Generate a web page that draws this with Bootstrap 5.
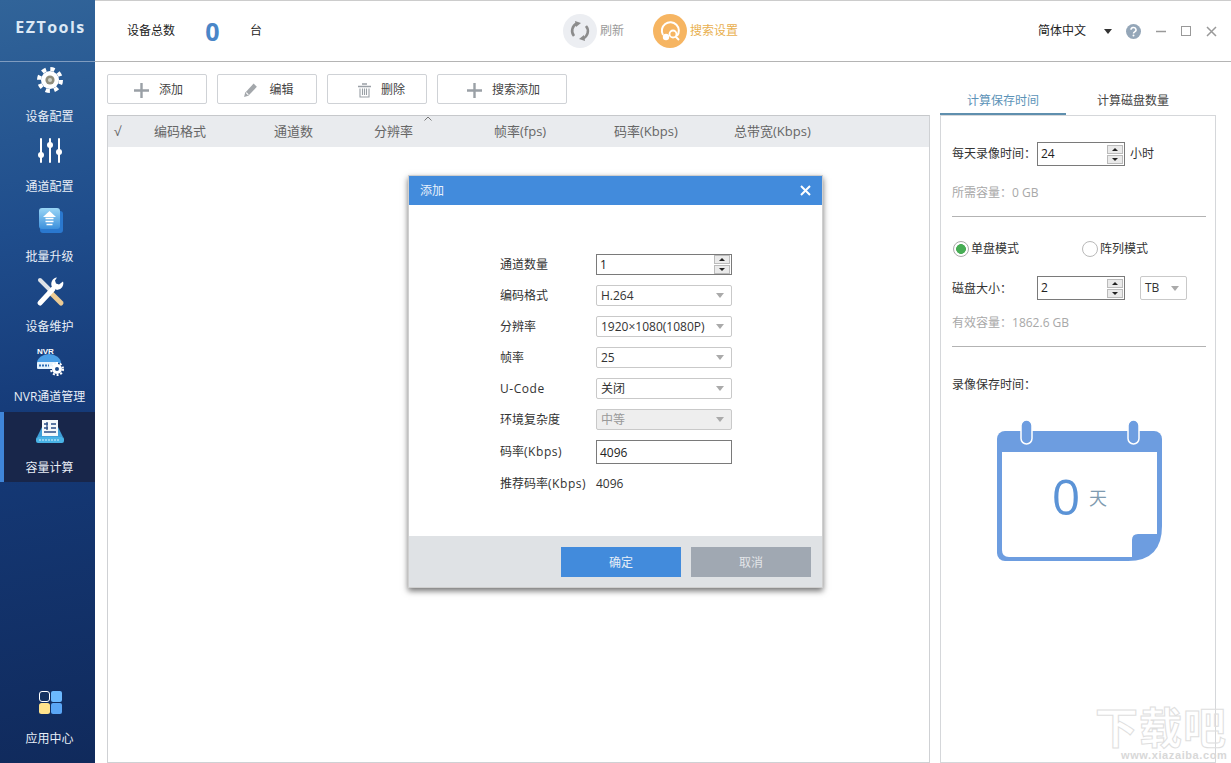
<!DOCTYPE html>
<html lang="zh-CN">
<head>
<meta charset="utf-8">
<title>EZTools</title>
<link href="https://cdn.jsdelivr.net/npm/bootstrap@5.3.0/dist/css/bootstrap.min.css" rel="stylesheet">
<style>
html,body{height:100%;}
body{width:1231px;height:763px;overflow:hidden;font:12px/16px "Open Sans","Noto Sans CJK SC",sans-serif;color:#333;background:#fff;position:relative;}
.app-side{width:95px;flex:none;background:linear-gradient(170deg,#316499 0%,#1f4d8c 30%,#153a78 55%,#102a5c 100%);color:#fff;}
.app-logo{height:62px;padding-left:6px;border-bottom:1px solid #7f9cc0;font:bold 16px/54px "Open Sans",sans-serif;letter-spacing:1.5px;color:#dbe8f5;text-align:center;}
.app-item{height:70px;color:#e8eef7;text-align:center;border-left:4px solid transparent;margin:0;}
.app-item svg{display:block;margin:0 auto;height:36px;}
.app-item span{display:block;margin-top:9px;line-height:20px;white-space:nowrap;}
.app-item.on{background:#18264a;border-left-color:#3f85d8;padding-top:1px;}
.app-bottom{margin-bottom:9px;}
.app-main{min-width:0;}
.app-head{height:62px;flex:none;border-top:1px solid #ccc;border-bottom:1px solid #b4b4b4;color:#222;}
.h-count{width:48px;margin-left:32px;}
.h-zero{width:75px;text-align:center;font:bold 25px/30px "Open Sans",sans-serif;color:#4a86c8;}
.h-unit{width:13px;}
.h-act{color:#9a9a9a;gap:3px;margin-left:300px;}
.h-act.warm{color:#e9b04f;margin-left:29px;}
.h-right{margin-left:auto;padding-right:14px;}
.h-caret{width:0;height:0;border:4px solid transparent;border-top:5px solid #333;border-bottom:0;margin-left:18px;}
.ml15{margin-left:15px;}
.ml14{margin-left:14px;}
.app-work{min-height:0;}
.work-left{width:835px;padding-left:12px;flex:none;}
.tool-row{padding-top:12px;height:53px;gap:10px;flex:none;}
.tool-btn{width:100px;height:30px;padding:2px 0 0 3px;font-size:12px;line-height:16px;color:#444;background:#fff;border:1px solid #cfd2d6;border-radius:2px;gap:10px;}
.tool-btn.wide{width:130px;}
.tool-btn.trash{padding-left:9px;}
.tool-btn svg{flex:none;}
.grid-wrap{border:1px solid #cfd1d4;border-top-color:#c6c8cb;}
.grid-table{table-layout:fixed;width:100%;margin:0;}
.grid-table th{background:#e9ebee;color:#666;font-weight:400;font-size:13px;line-height:31px;height:31px;padding:0;border:0;position:relative;}
.grid-table th:first-child{padding-left:6px;}
.col-a{width:46px;}.col-b{width:120px;}.col-c{width:100px;}
.sort-mark{position:absolute;left:50px;top:-1px;width:8px;height:8px;}
.work-right{width:276px;margin-left:10px;padding-top:31px;flex:none;}
.calc-tabs{height:22px;border:0;flex:none;flex-wrap:nowrap;}
.calc-tabs .nav-link{padding:0;border:0;width:126px;height:22px;line-height:16px;text-align:center;color:#444;border-radius:0;background:none;}
.calc-tabs .nav-link.wide-tab{width:134px;}
.calc-tabs .nav-link.active{color:#5c93b8;border-bottom:2px solid #5f8fae;background:none;}
.calc-panel{border:1px solid #d5d7da;padding:26px 9px 0 11px;color:#333;}
.calc-line{height:24px;}
.calc-label{width:85px;flex:none;}
.mid-colon{font-family:"Noto Sans CJK TC",sans-serif;line-height:0;}
.box-field{border:1px solid #7a7a7a;background:#fff;color:#222;display:flex;align-items:center;padding-left:3px;}
.box-field.w88{width:88px;height:24px;}
.spin-pair{width:16px;margin-left:auto;margin-right:1px;display:flex;flex-direction:column;gap:1px;}
.spin-pair i{display:block;height:9px;background:#eaeaea;border:1px solid #bbb;position:relative;}
.spin-pair i::after{content:"";position:absolute;left:4px;top:2px;border:3px solid transparent;border-bottom:3px solid #222;border-top:0;}
.spin-pair i.down::after{border-top:3px solid #222;border-bottom:0;}
.unit-after{margin-left:5px;}
.muted-note{color:#a8a8a8;line-height:16px;}
.note-one{margin:19px 0 15px;}
.note-two{margin:15px 0 15px;}
.calc-rule{border:0;border-top:1px solid #b3b3b3;opacity:1;margin:0;}
.calc-radios{margin:24px 0 0 1px;}
.disk-line{margin-top:19px;}
.disk-line .calc-label{padding-top:1px;}
.choice{display:flex;align-items:center;gap:2px;margin:0;padding:0;min-height:0;}
.choice+.choice{margin-left:63px;}
.choice .form-check-input{width:16px;height:16px;margin:0;float:none;background-color:#fff;border:1px solid #b9b9b9;}
.choice .form-check-input:checked{background-color:#fff;background-image:radial-gradient(circle,#47ad55 0 4.6px,transparent 5.2px);border-color:#a9a9a9;}
.drop-field{height:21px;border:1px solid #c9c9c9;border-radius:2px;background:#fff;display:flex;align-items:center;padding:0 4px;color:#333;white-space:nowrap;}
.drop-field::after{content:"";margin-left:auto;border:4px solid transparent;border-top:5px solid #aaa;border-bottom:0;flex:none;margin-right:3px;}
.drop-field.off{background:#eee;color:#999;}
.drop-tb{width:47px;height:24px;margin-left:15px;padding-left:4px;flex:none;}
.save-title{margin-top:30px;}
.calendar{display:block;margin:25px auto 0;position:relative;left:1px;}
.dlg{position:absolute;left:408px;top:175px;width:415px;height:413px;background:#fff;border:1px solid #cfcfcf;box-shadow:0 3px 6px rgba(0,0,0,.55);}
.dlg-title{height:29px;background:#428bdc;color:#e8f1fb;padding:0 11px;flex:none;}
.dlg-body{padding:49px 0 0 91px;}
.f-line{display:grid;grid-template-columns:96px 136px;align-items:center;height:21px;margin-bottom:10px;color:#333;}
.f-line .box-field{height:21px;}
.f-line.tall{height:24px;margin:1px 0 9px;padding-top:0;}
.f-line.tall .box-field{height:24px;padding-top:1px;}
.lat{letter-spacing:.55px;}
.dlg-foot{height:51px;background:#dfe2e5;padding:11px 11px 10px;gap:10px;flex:none;}
.dlg-btn{width:120px;height:30px;padding:2px 0 0;border:0;border-radius:0;font-size:12px;color:#e6eef7;}
.dlg-btn.yes{background:#428bdc;}
.dlg-btn.no{background:#a0a8b2;color:#e3e5e8;}
.wm{position:absolute;left:1095px;top:705px;color:transparent;-webkit-text-stroke:1px #dedede;font:bold 43px/40px "Noto Sans CJK SC",sans-serif;white-space:nowrap;letter-spacing:1px;}
.wm-url{position:absolute;left:1121px;top:749px;font:bold 11px/13px "Liberation Sans",sans-serif;color:#d8d8d8;letter-spacing:.6px;white-space:nowrap;}
</style>
</head>
<body>
<div class="d-flex h-100">
  <nav class="app-side d-flex flex-column">
    <div class="app-logo">EZTools</div>
    <div class="app-item">
      <svg width="30" height="36" viewBox="0 0 30 36"><circle cx="15" cy="18" r="9" fill="#fff"/><circle cx="15" cy="18" r="11" fill="none" stroke="#fff" stroke-width="4" stroke-dasharray="4.3 4.34"/><circle cx="15" cy="18" r="4.6" fill="#8f8d7c"/><circle cx="15" cy="18" r="2" fill="#cfd0c4"/></svg>
      <span>设备配置</span>
    </div>
    <div class="app-item">
      <svg width="30" height="36" viewBox="0 0 30 36" stroke="#fff" stroke-width="2" stroke-linecap="round"><path d="M6 7V30M15 7V30M24 7V30"/><circle cx="6" cy="23" r="3" fill="#fff" stroke="none"/><circle cx="15" cy="13" r="3" fill="#fff" stroke="none"/><circle cx="24" cy="20" r="3" fill="#fff" stroke="none"/></svg>
      <span>通道配置</span>
    </div>
    <div class="app-item">
      <svg width="30" height="36" viewBox="0 0 30 36"><defs><linearGradient id="u" x1="0" y1="0" x2="0" y2="1"><stop offset="0" stop-color="#9ad6f6"/><stop offset="1" stop-color="#3c90dc"/></linearGradient></defs><rect x="5" y="9" width="23" height="22" rx="3" fill="#2a78cf"/><rect x="4" y="6" width="21" height="21" rx="3" fill="url(#u)"/><path d="M14.500 9 21 15H8Z" fill="#fff"/><path d="M10.500 16.500H18.500M10.500 19.500H18.500M11.500 22.500H17.500" stroke="#fff" stroke-width="1.600"/></svg>
      <span>批量升级</span>
    </div>
    <div class="app-item">
      <svg width="30" height="36" viewBox="0 0 30 36"><path d="M15 20 26 31" stroke="#eccb94" stroke-width="5" stroke-linecap="round"/><path d="M5 8 14 17" stroke="#dfe3e8" stroke-width="4" stroke-linecap="round"/><path d="M5 31 18 17" stroke="#fff" stroke-width="5" stroke-linecap="round"/><path d="M22 5.500a6.500 6.500 0 0 0-5 9.500l5 3a6.500 6.500 0 0 0 6-8.500l-4 3-3-1-1-3z" fill="#fff"/></svg>
      <span>设备维护</span>
    </div>
    <div class="app-item">
      <svg width="30" height="36" viewBox="0 0 30 36"><text x="2" y="12" font-size="8" font-family="Liberation Sans" fill="#fff" font-weight="bold">NVR</text><path d="M2 21a12 9 0 0 1 24 0Z" fill="#4b9fe6" /><rect x="2" y="20" width="21" height="7" rx="1" fill="#e5f2fc"/><path d="M4 23.500H14" stroke="#2f6fb6" stroke-width="2" stroke-dasharray="2 1"/><circle cx="22" cy="27" r="5" fill="#fff"/><circle cx="22" cy="27" r="6" fill="none" stroke="#fff" stroke-width="2" stroke-dasharray="2 1.800"/><circle cx="22" cy="27" r="2" fill="#1f4d8c"/></svg>
      <span>NVR通道管理</span>
    </div>
    <div class="app-item on">
      <svg width="30" height="36" viewBox="0 0 30 36"><path d="M2 24 7 14H23L28 24Z" fill="#3e9fd8"/><rect x="1" y="24" width="28" height="6" rx="2" fill="#49b3e6"/><path d="M4 27H24" stroke="#d5f0fb" stroke-width="1" stroke-dasharray="2 1"/><rect x="7" y="7" width="16" height="16" fill="#f4f8fb"/><path d="M9 11H13M16 11H21M9 15H13M16 15H21M9 19H21M12 9V17" stroke="#2b4f88" stroke-width="1.300"/></svg>
      <span>容量计算</span>
    </div>
    <div class="app-item app-bottom mt-auto">
      <svg width="30" height="36" viewBox="0 0 30 36"><rect x="4.500" y="7.500" width="10" height="10" rx="2.500" fill="#13305f" stroke="#fff"/><rect x="16" y="7" width="11" height="11" rx="2" fill="#6cb9ff"/><rect x="4" y="19" width="11" height="11" rx="2.500" fill="#ffe38c"/><rect x="16" y="19" width="11" height="11" rx="2" fill="#5aa6f6"/></svg>
      <span>应用中心</span>
    </div>
  </nav>
  <div class="app-main flex-grow-1 d-flex flex-column">
    <header class="app-head d-flex align-items-center">
      <div class="h-count">设备总数</div>
      <div class="h-zero">0</div>
      <div class="h-unit">台</div>
      <div class="h-act d-flex align-items-center">
        <svg width="34" height="34" viewBox="0 0 34 34"><circle cx="17" cy="17" r="17" fill="#eceef2"/><path d="M11 22a8 8 0 0 1 3-12.500M23 12a8 8 0 0 1-3 12.500" fill="none" stroke="#8c8c8c" stroke-width="2.600"/><path d="M12 7l6 2-5 4zM22 27l-6-2 5-4z" fill="#8c8c8c"/></svg>
        <span>刷新</span>
      </div>
      <div class="h-act warm d-flex align-items-center">
        <svg width="34" height="34" viewBox="0 0 34 34"><circle cx="17" cy="17" r="17" fill="#f6b562"/><path d="M10 21a8.500 8.500 0 1 1 14 1" fill="none" stroke="#fff" stroke-width="2"/><circle cx="13" cy="23" r="3.200" fill="#fff"/><circle cx="20" cy="20" r="3.500" fill="none" stroke="#fff" stroke-width="1.800"/><path d="M22.500 22.500 26 26" stroke="#fff" stroke-width="2"/></svg>
        <span>搜索设置</span>
      </div>
      <div class="h-right d-flex align-items-center">
        <span>简体中文</span>
        <i class="h-caret"></i>
        <svg class="ml14" width="15" height="15" viewBox="0 0 15 15"><circle cx="7.500" cy="7.500" r="7.500" fill="#94a6b8"/><path d="M5 5.800a2.500 2.300 0 1 1 3.700 2c-.9.500-1.200.9-1.200 1.700" fill="none" stroke="#fff" stroke-width="1.500"/><circle cx="7.500" cy="11.600" r="1" fill="#fff"/></svg>
        <svg class="ml15" width="10" height="10" viewBox="0 0 10 10"><path d="M0 5.500H10" stroke="#999" stroke-width="1.500"/></svg>
        <svg class="ml15" width="10" height="10" viewBox="0 0 10 10"><rect x=".5" y=".5" width="9" height="9" fill="none" stroke="#999"/></svg>
        <svg class="ml15" width="11" height="11" viewBox="0 0 11 11"><path d="M1 1 10 10M10 1 1 10" stroke="#999" stroke-width="1.500"/></svg>
      </div>
    </header>
    <div class="app-work flex-grow-1 d-flex">
      <section class="work-left d-flex flex-column">
        <div class="tool-row d-flex">
          <button class="btn tool-btn d-flex align-items-center justify-content-center"><svg width="15" height="15" viewBox="0 0 15 15"><path d="M7.500 0V15M0 7.500H15" stroke="#9aa0a6" stroke-width="2.400"/></svg><span>添加</span></button>
          <button class="btn tool-btn d-flex align-items-center justify-content-center"><svg width="16" height="16" viewBox="0 0 15 15"><path d="M1 14l1-4 8-8.500 3 3L5 13z" fill="#a3a7ab"/><path d="M3 10l2 2" stroke="#fff"/></svg><span>编辑</span></button>
          <button class="btn tool-btn trash d-flex align-items-center justify-content-center"><svg width="13" height="15" viewBox="0 0 13 15"><path d="M4 1H9M0 3.500H13" stroke="#9aa0a6" stroke-width="1.400"/><path d="M2 5.500V14H11V5.500M4.500 5.500V12M6.500 5.500V12M8.500 5.500V12" fill="none" stroke="#9aa0a6" stroke-width="1.100"/></svg><span>删除</span></button>
          <button class="btn tool-btn wide d-flex align-items-center justify-content-center"><svg width="15" height="15" viewBox="0 0 15 15"><path d="M7.500 0V15M0 7.500H15" stroke="#9aa0a6" stroke-width="2.400"/></svg><span>搜索添加</span></button>
        </div>
        <div class="grid-wrap flex-grow-1">
          <table class="table grid-table">
            <colgroup><col class="col-a"><col class="col-b"><col class="col-c"><col class="col-b"><col class="col-b"><col class="col-b"><col></colgroup>
            <thead><tr><th>√</th><th>编码格式</th><th>通道数</th><th>分辨率<svg class="sort-mark" viewBox="0 0 8 8"><path d="M.5 5.500 4 2 7.500 5.500" fill="none" stroke="#777"/></svg></th><th>帧率(fps)</th><th>码率(Kbps)</th><th>总带宽(Kbps)</th></tr></thead>
          </table>
        </div>
      </section>
      <aside class="work-right d-flex flex-column">
        <ul class="nav calc-tabs d-flex">
          <li class="nav-item"><a class="nav-link active" href="#">计算保存时间</a></li>
          <li class="nav-item"><a class="nav-link wide-tab" href="#">计算磁盘数量</a></li>
        </ul>
        <div class="calc-panel flex-grow-1">
          <div class="calc-line d-flex align-items-center">
            <span class="calc-label">每天录像时间<span class="mid-colon">：</span></span>
            <div class="box-field w88">24<span class="spin-pair"><i></i><i class="down"></i></span></div>
            <span class="unit-after">小时</span>
          </div>
          <div class="muted-note note-one">所需容量<span class="mid-colon">：</span>0 GB</div>
          <hr class="calc-rule">
          <div class="d-flex calc-radios">
            <label class="choice"><input class="form-check-input" type="radio" name="m" checked><span>单盘模式</span></label>
            <label class="choice"><input class="form-check-input" type="radio" name="m"><span>阵列模式</span></label>
          </div>
          <div class="calc-line d-flex align-items-center disk-line">
            <span class="calc-label">磁盘大小<span class="mid-colon">：</span></span>
            <div class="box-field w88">2<span class="spin-pair"><i></i><i class="down"></i></span></div>
            <div class="drop-field drop-tb">TB</div>
          </div>
          <div class="muted-note note-two">有效容量<span class="mid-colon">：</span>1862.6 GB</div>
          <hr class="calc-rule">
          <div class="save-title">录像保存时间<span class="mid-colon">：</span></div>
          <svg class="calendar" width="170" height="145" viewBox="0 0 170 145">
            <path d="M10 13H159a8 8 0 0 1 8 8V108Q167 143 133 143H10a8 8 0 0 1-8-8V21a8 8 0 0 1 8-8Z" fill="#6d9de0"/>
            <path d="M7 34H162V116H143Q137 116 137 122V139H14Q7 139 7 132Z" fill="#fff"/>
            <rect x="26" y="2" width="11" height="24" rx="5.500" fill="#6d9de0" stroke="#fff" stroke-width="1.500"/>
            <rect x="133" y="2" width="11" height="24" rx="5.500" fill="#6d9de0" stroke="#fff" stroke-width="1.500"/>
            <text x="71" y="97" text-anchor="middle" font-size="50" font-family="Open Sans" fill="#5b93d6">0</text>
            <text x="94" y="87" font-size="18" font-family="Noto Sans CJK SC" fill="#7f9bb0">天</text>
          </svg>
        </div>
      </aside>
    </div>
  </div>
</div>

<div class="dlg d-flex flex-column" role="dialog">
  <div class="dlg-title d-flex align-items-center justify-content-between">
    <span>添加</span>
    <svg width="11" height="11" viewBox="0 0 11 11"><path d="M1 1 10 10M10 1 1 10" stroke="#fff" stroke-width="2"/></svg>
  </div>
  <div class="dlg-body flex-grow-1">
    <div class="f-line"><span>通道数量</span><div class="box-field">1<span class="spin-pair"><i></i><i class="down"></i></span></div></div>
    <div class="f-line"><span>编码格式</span><div class="drop-field">H.264</div></div>
    <div class="f-line"><span>分辨率</span><div class="drop-field">1920×1080(1080P)</div></div>
    <div class="f-line"><span>帧率</span><div class="drop-field">25</div></div>
    <div class="f-line"><span class="lat">U-Code</span><div class="drop-field">关闭</div></div>
    <div class="f-line"><span>环境复杂度</span><div class="drop-field off">中等</div></div>
    <div class="f-line tall"><span>码率<span class="lat">(Kbps)</span></span><div class="box-field">4096</div></div>
    <div class="f-line"><span>推荐码率<span class="lat">(Kbps)</span></span><span>4096</span></div>
  </div>
  <div class="dlg-foot d-flex justify-content-end">
    <button class="btn dlg-btn yes">确定</button>
    <button class="btn dlg-btn no">取消</button>
  </div>
</div>

<div class="wm">下载吧</div>
<div class="wm-url">www.xiazaiba.com</div>
<script src="https://cdn.jsdelivr.net/npm/bootstrap@5.3.0/dist/js/bootstrap.bundle.min.js"></script>
</body>
</html>
